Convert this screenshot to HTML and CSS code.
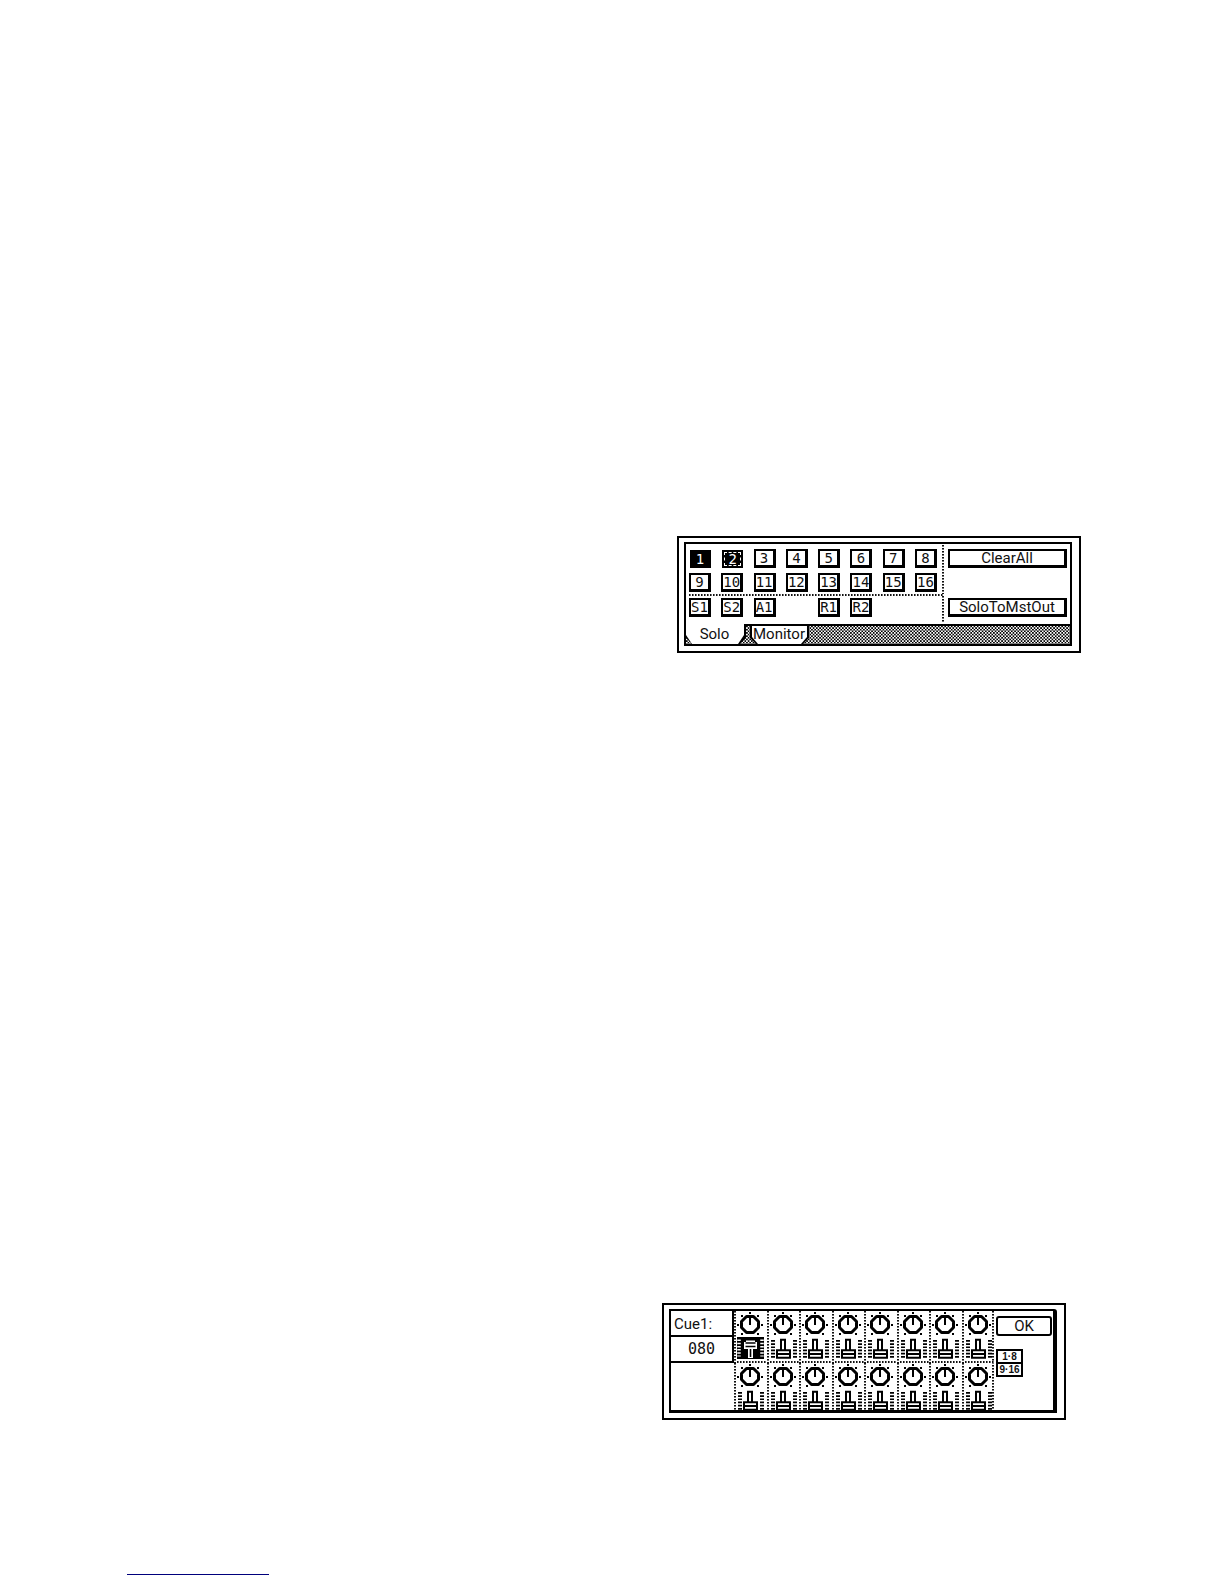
FILE: index.html
```
<!DOCTYPE html>
<html lang="en">
<head>
<meta charset="utf-8">
<title>Solo and Cue</title>
<link rel="stylesheet" href="styles.css">
</head>
<body>
<svg class="defs" aria-hidden="true">
  <symbol id="knob" viewBox="0 0 32 26">
    <path d="M12.500 5.500h7l5 5v6l-5 5h-7l-5-5v-6z" fill="#fff" stroke="#000" stroke-width="3" stroke-linejoin="round"/>
    <path d="M16 7v7" stroke="#000" stroke-width="2"/>
    <path d="M15 1h2v2h-2zM7 4h2v2h-2zM23 4h2v2h-2zM3 13h2v2h-2zM27 13h2v2h-2zM7 22h2v2h-2zM23 22h2v2h-2z"/>
  </symbol>
  <symbol id="fader" viewBox="0 0 32 23">
    <path d="M6 3v18M28 3v18" stroke="#000" stroke-width="4" stroke-dasharray="1.7 1.5"/>
    <path d="M14 2.800h4v10.500h-4zM10 13.300h13v7.500h-13zM10 17h13" fill="#fff" stroke="#000" stroke-width="2"/>
  </symbol>
  <symbol id="fader-on" viewBox="0 0 32 23">
    <path d="M3 0h27v22h-27z"/>
    <path d="M5 2.500v17M28 2.500v17" stroke="#fff" stroke-width="3.500" stroke-dasharray="1.500 1.700"/>
    <path d="M12 3.500h9v1.500h2v7h-4v9h-5v-9h-4v-7h2z" fill="#fff"/>
    <path d="M11.500 6h10M11.500 9.500h10M16.500 12v8" stroke="#000" stroke-width="1.600"/>
  </symbol>
</svg>

<main class="page">
  <section class="device" aria-label="Solo">
    <div class="screen solo">
      <div class="solo-body">
        <div class="channels">
          <div class="keys">
            <button class="key on">1</button><button class="key on cursor">2</button><button class="key">3</button><button class="key">4</button><button class="key">5</button><button class="key">6</button><button class="key">7</button><button class="key">8</button>
            <button class="key">9</button><button class="key">10</button><button class="key">11</button><button class="key">12</button><button class="key">13</button><button class="key">14</button><button class="key">15</button><button class="key">16</button>
          </div>
          <div class="keys buses">
            <button class="key">S1</button><button class="key">S2</button><button class="key">A1</button><span></span><button class="key">R1</button><button class="key">R2</button>
          </div>
        </div>
        <div class="actions">
          <button class="action">ClearAll</button>
          <button class="action">SoloToMstOut</button>
        </div>
      </div>
      <nav class="tabs">
        <button class="tab current"><span>Solo</span></button>
        <button class="tab"><span>Monitor</span></button>
      </nav>
    </div>
  </section>

  <section class="device cue-device" aria-label="Cue">
    <div class="screen cue">
      <div class="readout">
        <label for="level">Cue1:</label>
        <input id="level" type="text" value="080">
      </div>
      <div class="strips" id="strips"></div>
      <div class="side">
        <button class="ok">OK</button>
        <div class="banks">
          <button class="bank">1·8</button>
          <button class="bank">9·16</button>
        </div>
      </div>
    </div>
  </section>

  <hr class="rule">
</main>
<script src="strips.js"></script>
</body>
</html>
```

FILE: strips.js
```
const strips = document.getElementById('strips');
for (let channel = 1; channel <= 16; channel++) {
  const fader = channel === 1 ? 'fader-on' : 'fader';
  const level = channel === 1 ? 80 : 0;
  strips.insertAdjacentHTML('beforeend', `
    <div class="strip">
      <div class="control pan">
        <svg aria-hidden="true"><use href="#knob"/></svg>
        <input type="range" min="-64" max="64" value="0" aria-label="Pan ${channel}">
      </div>
      <div class="control level">
        <svg aria-hidden="true"><use href="#${fader}"/></svg>
        <input type="range" min="0" max="100" value="${level}" aria-label="Level ${channel}">
      </div>
    </div>`);
}
```

FILE: styles.css
```
* {
  box-sizing: border-box;
}

:root {
  --dots: #111 0 1px, #777 1px 2px, #fff 2px 3px;
  --row-dots: repeating-linear-gradient(90deg, var(--dots));
  --column-dots: repeating-linear-gradient(var(--dots));
}

body {
  margin: 0;
  background: #fff;
  color: #111;
  font: 15px/17px Roboto, "Liberation Sans", sans-serif;
}

button,
input {
  margin: 0;
  padding: 0;
  border: 0;
  border-radius: 0;
  background: #fff;
  color: inherit;
  font: inherit;
}

.defs {
  position: absolute;
  width: 0;
  height: 0;
}

.page {
  display: flex;
  flex-direction: column;
  padding: 536px 143px 8px 127px;
}

.device {
  align-self: flex-end;
  width: 404px;
  max-width: 100%;
  padding: 4px 7px 5px 5px;
  border: 2px solid #000;
}

.cue-device {
  margin: 650px 15px 0 0;
}

.screen {
  border: 2px solid #000;
}

/* Solo page */

.solo-body {
  display: flex;
  height: 80px;
}

.channels {
  flex: 1;
  padding: 5px 7px 0 3px;
  background: var(--column-dots) right 0 top 1px / 2px 78px no-repeat;
}

.keys {
  display: grid;
  grid-template-columns: repeat(8, 22px);
  justify-content: space-between;
  row-gap: 5px;
}

.buses {
  margin: 2px -7px 0 0;
  padding: 4px 7px 0 0;
  background: var(--row-dots) 0 0 / 100% 2px no-repeat;
}

.key {
  height: 19px;
  border: solid #000;
  border-width: 2px 3px 3px 2px;
  font: 14px/14px "DejaVu Sans Mono", monospace;
  display: flex;
  align-items: center;
  justify-content: center;
}

.key.on {
  margin: 1px 0 0 1px;
  height: 18px;
  background: #000;
  color: #fff;
}

.key.cursor {
  border: 2px dashed #000;
  outline: 1px dashed #fff;
  outline-offset: -3px;
}

.actions {
  display: flex;
  flex-direction: column;
  justify-content: space-between;
  width: 126px;
  padding: 5px 3px 7px 4px;
}

.action {
  height: 19px;
  border: solid #000;
  border-width: 2px 3px 3px 2px;
  line-height: 14px;
}

.tabs {
  display: flex;
  gap: 4px;
  height: 20px;
  background-color: #fff;
  background-image: url("data:image/svg+xml,%3Csvg xmlns='http://www.w3.org/2000/svg' width='13' height='13' viewBox='0 0 8 8'%3E%3Cpattern id='p' width='2' height='2' patternUnits='userSpaceOnUse'%3E%3Cpath d='M0 0h1v1H0zM1 1h1v1H1z'/%3E%3C/pattern%3E%3Crect width='8' height='8' fill='url(%23p)'/%3E%3C/svg%3E");
  box-shadow: inset 0 2px #000;
}

.tab {
  display: flex;
  padding: 2px 2px 0 2px;
  background: #000;
  clip-path: polygon(0 0, 100% 0, 100% 14px, calc(100% - 6px) 100%, 6px 100%, 0 14px);
}

.tab span {
  flex: 1;
  padding: 0 2px 0 1px;
  background: #fff;
  clip-path: polygon(0 0, 100% 0, 100% 11px, calc(100% - 6px) 100%, 6px 100%, 0 11px);
}

.tab.current {
  width: 60px;
  padding: 0 2px 0 0;
}

.tab.current span {
  padding-top: 2px;
}

/* Cue page */

.cue {
  display: flex;
  height: 104px;
  border-right-width: 4px;
  border-bottom-width: 3px;
  border-radius: 0 3px 0 0;
}

.readout {
  display: flex;
  flex-direction: column;
  width: 63px;
}

.readout label,
.readout input {
  width: 100%;
  border: solid #000;
  border-width: 0 2px 2px 0;
}

.readout label {
  height: 26px;
  padding: 5px 0 0 3px;
}

.readout input {
  height: 26px;
  font: 15px/20px "DejaVu Sans Mono", monospace;
  text-align: center;
}

.strips {
  display: grid;
  flex: 1;
  grid-template-columns: repeat(8, 1fr);
  grid-template-rows: 52px 47px;
  overflow: hidden;
  background: var(--column-dots) right / 2px 100% no-repeat;
}

.strip {
  overflow: hidden;
  background:
    var(--column-dots) 0 0 / 2px 100% no-repeat,
    var(--row-dots) 0 50px / 100% 2px no-repeat;
}

.control {
  position: relative;
  width: 32px;
}

.control svg {
  display: block;
  width: 32px;
  height: 100%;
}

.control input {
  position: absolute;
  inset: 0;
  width: 100%;
  height: 100%;
  opacity: 0;
}

.pan {
  height: 26px;
}

.level {
  height: 23px;
}

.side {
  display: flex;
  flex-direction: column;
  gap: 13px;
  width: 59px;
  padding: 5px 0 0 2px;
}

.ok {
  width: 56px;
  height: 20px;
  border: 2px solid #000;
  border-radius: 3px;
  line-height: 15px;
}

.banks {
  width: 27px;
  border: 2px solid #000;
}

.bank {
  display: block;
  width: 100%;
  height: 11px;
  font: bold 10px/11px "Liberation Sans", sans-serif;
}

.bank + .bank {
  height: 13px;
  border-top: 2px solid #000;
}

.rule {
  width: 142px;
  height: 1px;
  margin: 154px 0 0;
  border: 0;
  background: #00007c;
}
```
